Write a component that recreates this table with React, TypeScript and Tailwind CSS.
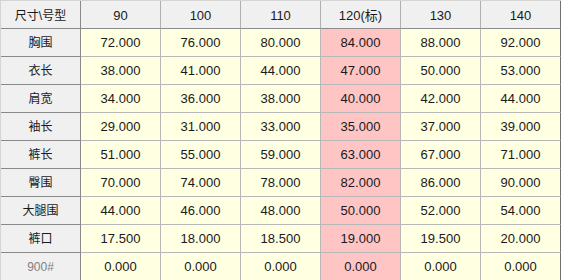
const cols = ["90", "100", "110", "120(标)", "130", "140"];

const rows: { label: string; values: string[]; muted?: boolean }[] = [
  { label: "胸围", values: ["72.000", "76.000", "80.000", "84.000", "88.000", "92.000"] },
  { label: "衣长", values: ["38.000", "41.000", "44.000", "47.000", "50.000", "53.000"] },
  { label: "肩宽", values: ["34.000", "36.000", "38.000", "40.000", "42.000", "44.000"] },
  { label: "袖长", values: ["29.000", "31.000", "33.000", "35.000", "37.000", "39.000"] },
  { label: "裤长", values: ["51.000", "55.000", "59.000", "63.000", "67.000", "71.000"] },
  { label: "臀围", values: ["70.000", "74.000", "78.000", "82.000", "86.000", "90.000"] },
  { label: "大腿围", values: ["44.000", "46.000", "48.000", "50.000", "52.000", "54.000"] },
  { label: "裤口", values: ["17.500", "18.000", "18.500", "19.000", "19.500", "20.000"] },
  { label: "900#", values: ["0.000", "0.000", "0.000", "0.000", "0.000", "0.000"], muted: true },
];

const font = "font-['Liberation_Sans','Noto_Sans_CJK_SC',sans-serif]";

export default function App() {
  return (
    <div className={`w-[561px] h-[280px] overflow-hidden bg-white ${font}`}>
      <div className="border-l border-t border-[#d4d4d4]">
        {/* header */}
        <div className="flex">
          <div className="flex h-[28px] w-[80px] items-center justify-center border-b border-r border-[#8a8a8a] bg-[#f0f0f0] pt-[2px] text-[12px] text-[#1a1a1a]">
            尺寸\号型
          </div>
          {cols.map((c, i) => (
            <div
              key={c}
              className={`flex h-[28px] w-[80px] items-center justify-center border-b border-b-[#8a8a8a] border-r bg-[#f0f0f0] pt-[2px] text-[13px] text-[#1a1a1a] ${
                i === cols.length - 1 ? "border-r-[#707070]" : "border-r-[#b0b0b0]"
              }`}
            >
              {c}
            </div>
          ))}
        </div>

        {rows.map((row) => (
          <div key={row.label} className="flex">
            <div
              className={`flex h-[28px] w-[80px] items-center justify-center border-b border-r border-[#8a8a8a] bg-[#f0f0f0] ${
                row.muted ? "text-[12px] text-[#808080]" : "text-[12px] text-[#1a1a1a]"
              }`}
            >
              {row.label}
            </div>
            {row.values.map((v, i) => (
              <div
                key={i}
                className={`flex h-[28px] w-[80px] items-center justify-center border-b border-b-[#b8b8b8] border-r text-[13px] text-[#1a1a1a] ${
                  i === 3 ? "bg-[#ffc4c4]" : "bg-[#ffffe1]"
                } ${i === row.values.length - 1 ? "border-r-[#707070]" : "border-r-[#b8b8b8]"}`}
              >
                {v}
              </div>
            ))}
          </div>
        ))}
      </div>
    </div>
  );
}
